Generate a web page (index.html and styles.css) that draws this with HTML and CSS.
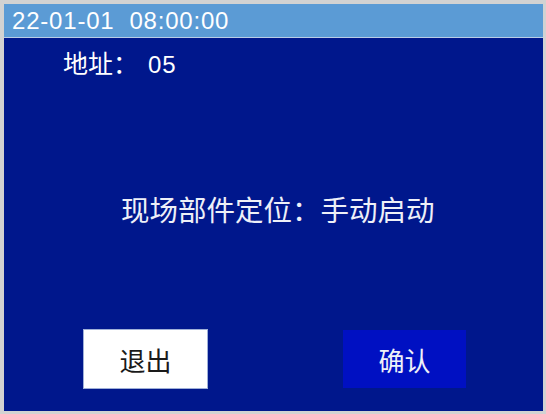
FILE: index.html
```html
<!DOCTYPE html>
<html lang="zh-CN">
<head>
<meta charset="utf-8">
<title>现场部件定位</title>
<link rel="stylesheet" href="styles.css">
</head>
<body>
<div class="screen">
  <div class="header">22-01-01&nbsp;&nbsp;08:00:00</div>
  <div class="main">
    <div class="address"><span class="label">地址：</span><span class="num">05</span></div>
    <div class="message">现场部件定位：手动启动</div>
    <div class="buttons">
      <div class="btn btn-exit">退出</div>
      <div class="btn btn-ok">确认</div>
    </div>
  </div>
</div>
</body>
</html>
```

FILE: styles.css
```css
html, body {
  margin: 0;
  padding: 0;
  background: #d2d2d2;
}
body {
  width: 546px;
  height: 414px;
  overflow: hidden;
  font-family: "Liberation Sans", "Noto Sans CJK SC", sans-serif;
}
.screen {
  margin: 4px 3px 3px 4px;
  width: 539px;
  height: 407px;
  display: flex;
  flex-direction: column;
  background: #00178c;
}
.header {
  height: 33px;
  background: #5b9bd5;
  border-bottom: 1px solid #b9cde6;
  color: #ffffff;
  font-size: 24px;
  letter-spacing: 0.8px;
  line-height: 33px;
  padding-left: 8px;
  white-space: nowrap;
}
.main {
  flex: 1;
  display: flex;
  flex-direction: column;
  color: #ffffff;
}
.address {
  margin-top: 9px;
  height: 30px;
  padding-left: 59px;
  display: flex;
  align-items: baseline;
  white-space: nowrap;
}
.address .label {
  font-family: "Noto Sans CJK SC", sans-serif;
  font-size: 25px;
  line-height: 30px;
}
.address .num {
  font-family: "Liberation Sans", sans-serif;
  font-size: 24px;
  letter-spacing: 1px;
  line-height: 30px;
  margin-left: 10px;
}
.message {
  margin-top: 115px;
  padding-left: 117px;
  font-family: "Noto Sans CJK SC", sans-serif;
  font-size: 28.5px;
  line-height: 34px;
  color: #eef0f8;
  white-space: nowrap;
}
.buttons {
  margin-top: 103px;
  display: flex;
  align-items: flex-start;
  padding-left: 79px;
  gap: 135px;
}
.btn {
  display: flex;
  align-items: center;
  justify-content: center;
  font-family: "Noto Sans CJK SC", sans-serif;
  font-size: 26px;
  box-sizing: border-box;
}
.btn-exit {
  width: 125px;
  height: 60px;
  background: #ffffff;
  border: 1px solid #9fb0d8;
  color: #1a1a1a;
}
.btn-ok {
  width: 123px;
  height: 58px;
  margin-top: 1px;
  background: #0010c2;
  color: #eef0f8;
}
```
